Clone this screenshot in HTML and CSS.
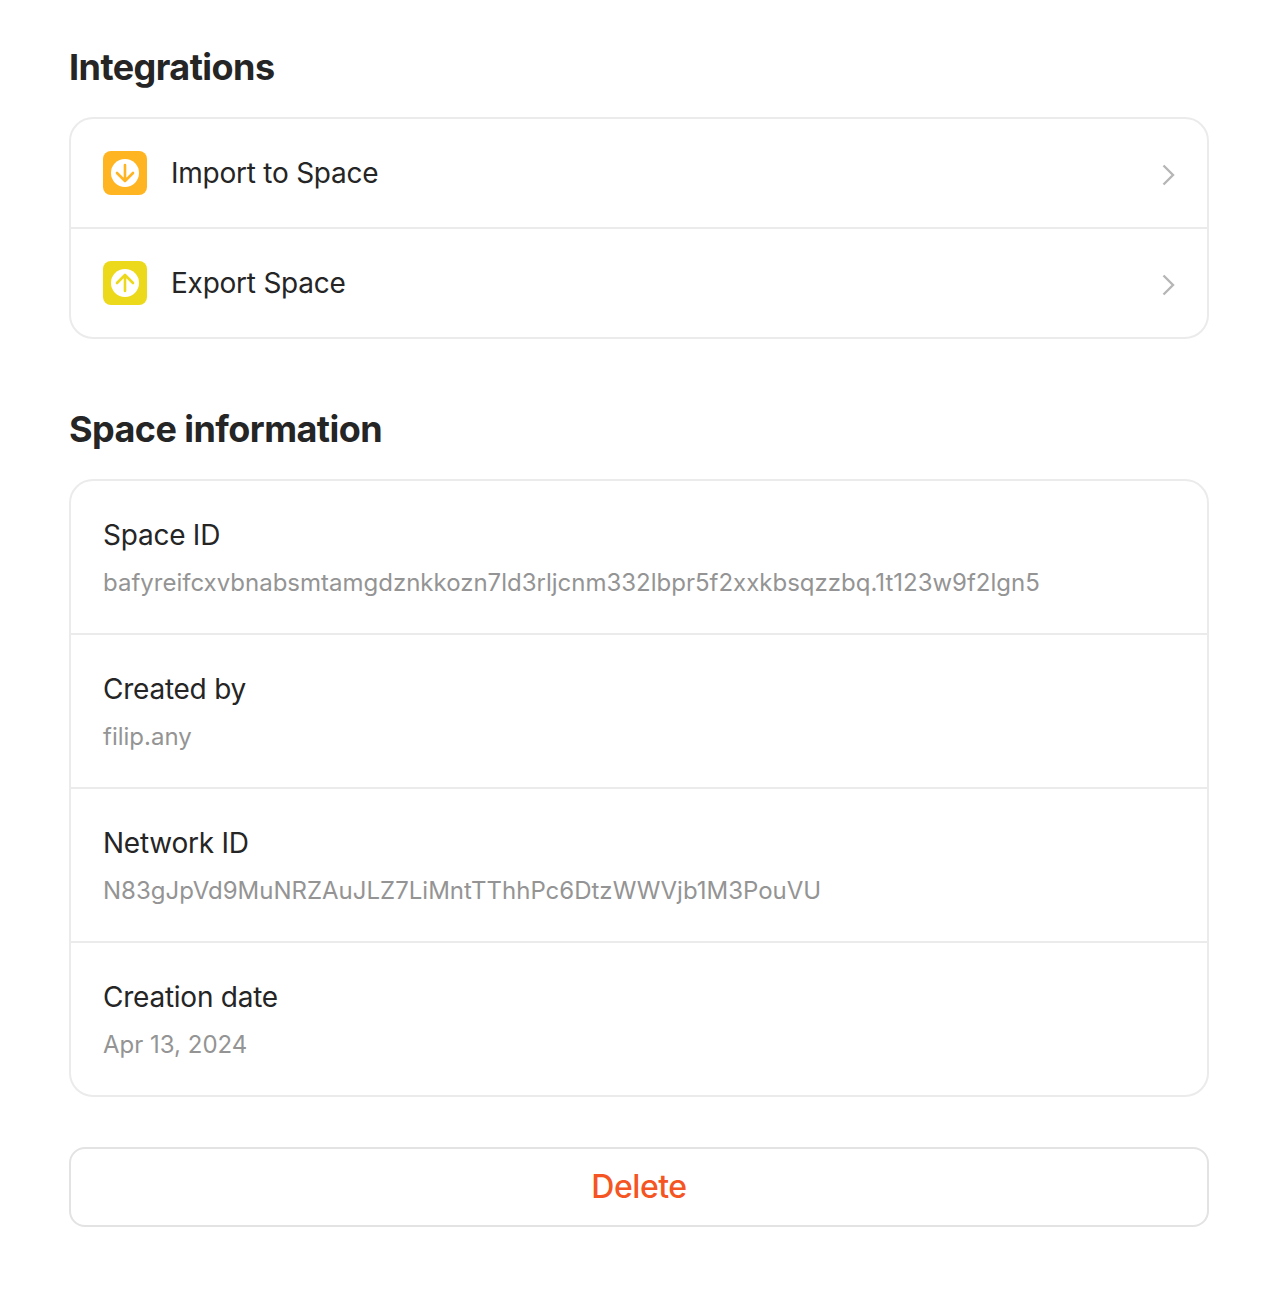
FILE: index.html
```html
<!DOCTYPE html>
<html lang="en">
<head>
<meta charset="utf-8">
<title>Space settings</title>
<link rel="stylesheet" href="styles.css">
</head>
<body>
<main class="settings">
  <section class="section">
    <h2 class="title">Integrations</h2>
    <div class="card">
      <div class="row">
        <svg class="icon" viewBox="0 0 44 44"><rect width="44" height="44" rx="8" fill="#ffb522"/><circle cx="22" cy="22" r="14" fill="#fff"/><path d="M22 14v16M14 22l8 8 8-8" fill="none" stroke="#ffb522" stroke-width="2.600" stroke-linecap="round" stroke-linejoin="round"/></svg>
        <span class="name">Import to Space</span>
        <svg class="chevron" viewBox="0 0 14 22"><path d="M2.500 1.500l9.500 9.500-9.500 9.500" fill="none" stroke="#b6b6b6" stroke-width="2.400"/></svg>
      </div>
      <div class="row">
        <svg class="icon" viewBox="0 0 44 44"><rect width="44" height="44" rx="8" fill="#ecd91b"/><circle cx="22" cy="22" r="14" fill="#fff"/><path d="M22 30V14M14 22l8-8 8 8" fill="none" stroke="#ecd91b" stroke-width="2.600" stroke-linecap="round" stroke-linejoin="round"/></svg>
        <span class="name">Export Space</span>
        <svg class="chevron" viewBox="0 0 14 22"><path d="M2.500 1.500l9.500 9.500-9.500 9.500" fill="none" stroke="#b6b6b6" stroke-width="2.400"/></svg>
      </div>
    </div>
  </section>
  <section class="section">
    <h2 class="title">Space information</h2>
    <div class="card">
      <div class="info"><div class="name">Space ID</div><div class="value">bafyreifcxvbnabsmtamgdznkkozn7ld3rljcnm332lbpr5f2xxkbsqzzbq.1t123w9f2lgn5</div></div>
      <div class="info"><div class="name">Created by</div><div class="value">filip.any</div></div>
      <div class="info"><div class="name">Network ID</div><div class="value">N83gJpVd9MuNRZAuJLZ7LiMntTThhPc6DtzWWVjb1M3PouVU</div></div>
      <div class="info"><div class="name">Creation date</div><div class="value">Apr 13, 2024</div></div>
    </div>
  </section>
  <button class="delete">Delete</button>
</main>
</body>
</html>
```
FILE: styles.css
```css
* { box-sizing: border-box; }
body { margin: 0; background: #fff; color: #252525; font-family: Inter, sans-serif; }
.settings { width: 1140px; margin-left: 69px; padding-top: 43px; }
.section { margin-bottom: 66px; }
.section + .section { margin-bottom: 50px; }
.title { margin: 0 0 26px; font-size: 36px; line-height: 48px; font-weight: 700; letter-spacing: -0.56px; }
.card { border: 2px solid #ebebeb; border-radius: 24px; }
.row { display: flex; align-items: center; height: 108px; padding: 0 32px; }
.row + .row, .info + .info { border-top: 2px solid #ebebeb; }
.row + .row { height: 110px; }
.icon { width: 44px; height: 44px; margin-right: 24px; }
.chevron { width: 14px; height: 22px; margin: 4px 0 0 auto; }
.name { font-size: 28px; line-height: 44px; letter-spacing: -0.24px; }
.info { height: 152px; padding: 32px; }
.info + .info { height: 154px; }
.value { margin-top: 8px; color: #949494; font-size: 24px; line-height: 36px; letter-spacing: 0; white-space: nowrap; }
.delete { display: block; width: 100%; height: 80px; padding: 0; border: 2px solid #e3e3e3; border-radius: 16px; background: #fff; color: #f55522; font: 500 32px/44px Inter, sans-serif; letter-spacing: -0.45px; }
```
